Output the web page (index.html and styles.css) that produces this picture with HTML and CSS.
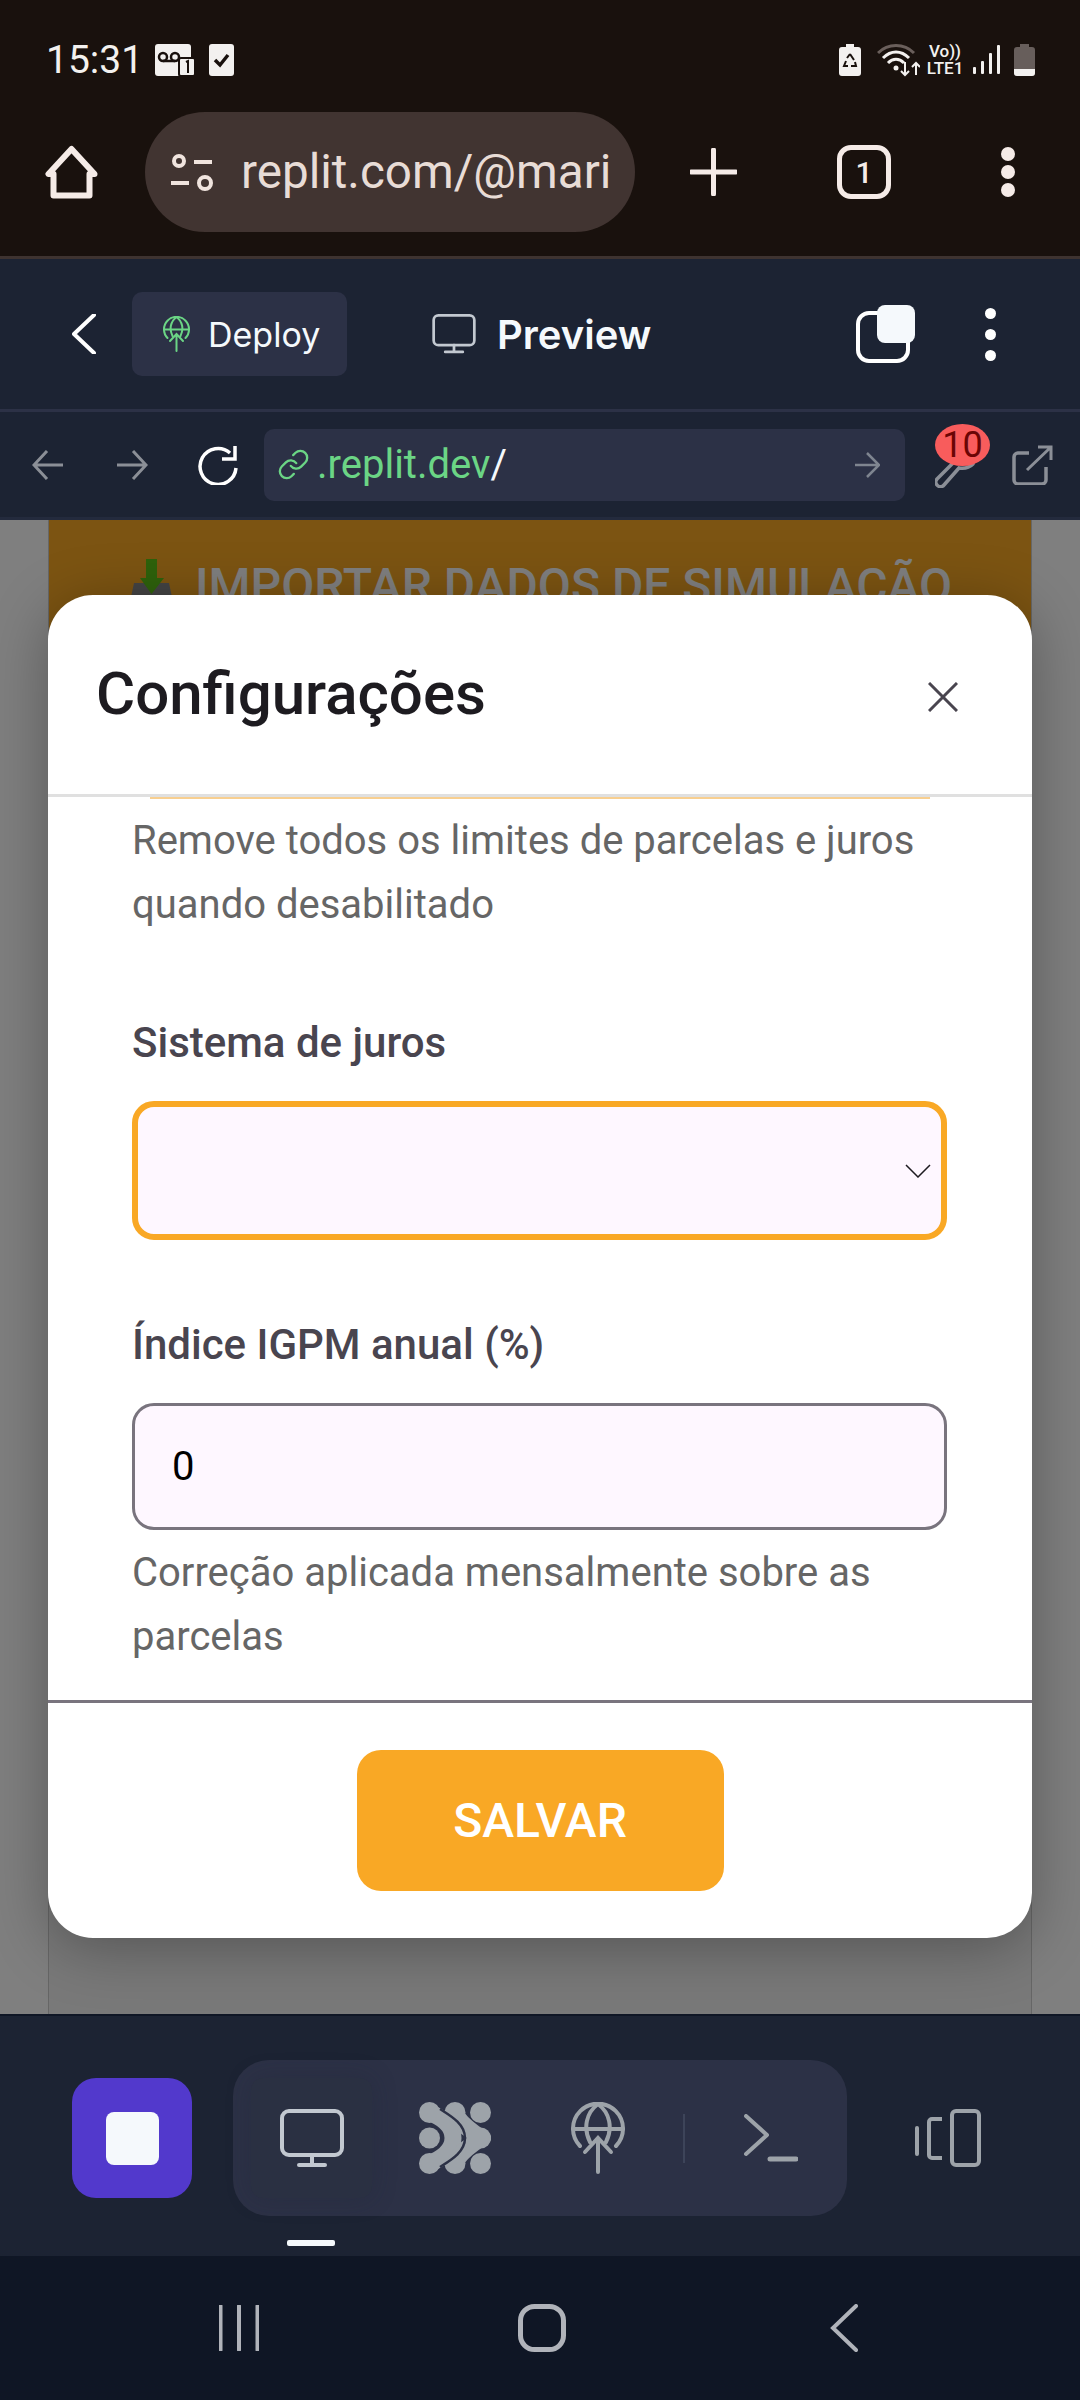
FILE: index.html
```html
<!DOCTYPE html>
<html lang="pt-BR">
<head>
    <meta charset="utf-8">
    <title>Configurações</title>
    <link rel="stylesheet" href="styles.css">
</head>
<body>
    <svg class="defs" width="0" height="0">
        <symbol id="monitor" viewBox="0 0 64 59">
            <rect x="2" y="2" width="60" height="44" rx="7" fill="none" stroke="currentColor" stroke-width="4"/>
            <path d="M32 46V56M19 56H45" fill="none" stroke="currentColor" stroke-width="4" stroke-linecap="round"/>
        </symbol>
        <symbol id="globe-up" viewBox="0 0 54 72">
            <g fill="none" stroke="currentColor" stroke-width="4" stroke-linecap="round">
                <path d="M9 44A25 25 0 1 1 45 44"/>
                <path d="M19 40C12 26 15 11 27 2C39 11 42 26 35 40"/>
                <path d="M2 27H52"/>
                <path d="M27 70V36M14 50L27 36L40 50"/>
            </g>
        </symbol>
    </svg>

    <div class="phone">
        <header class="chrome">
            <div class="status-row">
                <span class="clock">15:31</span>
                <svg class="voicemail" width="40" height="32" viewBox="0 0 40 32">
                    <rect x="0" y="0" width="36" height="32" rx="3" fill="#f3f1ef"/>
                    <g fill="none" stroke="#19110d" stroke-width="2.5">
                        <circle cx="8" cy="13" r="4"/>
                        <circle cx="20" cy="13" r="4"/>
                        <path d="M8 17H20"/>
                    </g>
                    <rect x="24" y="14" width="16" height="18" rx="2" fill="#f3f1ef" stroke="#19110d" stroke-width="2"/>
                    <path d="M31 18L33 17V29" fill="none" stroke="#19110d" stroke-width="2"/>
                </svg>
                <svg class="checkbox" width="25" height="32" viewBox="0 0 25 32">
                    <rect width="25" height="32" rx="3" fill="#f3f1ef"/>
                    <path d="M6 16L11 21L19 11" fill="none" stroke="#19110d" stroke-width="3.5"/>
                </svg>
                <div class="status-right">
                    <svg width="22" height="32" viewBox="0 0 22 32">
                        <path d="M7 0H15V3H19A3 3 0 0 1 22 6V29A3 3 0 0 1 19 32H3A3 3 0 0 1 0 29V6A3 3 0 0 1 3 3H7Z" fill="#f3f1ef"/>
                        <path d="M11 10L15 16M16 18L17 22H12M9 22H5L7 17M8 14L11 10" fill="none" stroke="#19110d" stroke-width="2"/>
                    </svg>
                    <svg class="wifi" width="43" height="33" viewBox="0 0 43 33">
                        <g fill="none" stroke-width="3">
                            <path d="M1 9C11 -1 27 -1 37 9" stroke="#6a5f5b"/>
                            <path d="M6 14C14 6 24 6 32 14" stroke="#f3f1ef"/>
                            <path d="M11 19C16 14 22 14 27 19" stroke="#f3f1ef"/>
                        </g>
                        <circle cx="19" cy="24" r="2.5" fill="#f3f1ef"/>
                        <path d="M28 18V31M24 27L28 31L32 27M39 31V20M35 23L39 19L43 23" fill="none" stroke="#f3f1ef" stroke-width="2"/>
                    </svg>
                    <div class="volte"><span>Vo))</span><span>LTE1</span></div>
                    <svg class="signal" width="28" height="30" viewBox="0 0 28 30">
                        <g fill="#f3f1ef">
                            <rect x="0" y="22" width="3" height="7" rx="1"/>
                            <rect x="8" y="16" width="3" height="13" rx="1"/>
                            <rect x="16" y="8" width="3" height="21" rx="1"/>
                            <rect x="24" y="0" width="3" height="29" rx="1"/>
                        </g>
                    </svg>
                    <svg class="battery" width="21" height="32" viewBox="0 0 21 32">
                        <path d="M6 0H15V3H18A3 3 0 0 1 21 6V29A3 3 0 0 1 18 32H3A3 3 0 0 1 0 29V6A3 3 0 0 1 3 3H6Z" fill="#675e5b"/>
                        <path d="M0 25H21V29A3 3 0 0 1 18 32H3A3 3 0 0 1 0 29Z" fill="#f3f1ef"/>
                    </svg>
                </div>
            </div>
            <div class="browser-row">
                <svg class="home-icon" width="53" height="54" viewBox="0 0 53 54">
                    <path d="M26.5 4L3.5 29H8.5V50.5H44.5V29H49.5Z" fill="none" stroke="#f5ebe7" stroke-width="6" stroke-linejoin="round"/>
                </svg>
                <div class="address">
                    <svg width="45" height="37" viewBox="0 0 45 37">
                        <g fill="none" stroke="#f0e4de" stroke-width="4">
                            <circle cx="9" cy="7" r="5"/>
                            <circle cx="35" cy="29" r="6"/>
                            <path d="M24 8H42M1 29H19"/>
                        </g>
                    </svg>
                    <span class="address-text">replit.com/@mari</span>
                </div>
                <svg class="plus-icon" width="47" height="48" viewBox="0 0 47 48">
                    <path d="M23.5 2V46M1 24H46" stroke="#f5ebe7" stroke-width="5" stroke-linecap="round"/>
                </svg>
                <div class="tab-count">1</div>
                <div class="dots dots-chrome"><i></i><i></i><i></i></div>
            </div>
        </header>

        <div class="replit-bar">
            <svg class="back-icon" width="24" height="40" viewBox="0 0 24 40">
                <path d="M22 1L2 20L22 39" fill="none" stroke="#fff" stroke-width="4" stroke-linecap="round" stroke-linejoin="round"/>
            </svg>
            <div class="deploy-chip">
                <svg class="green" width="27" height="36"><use href="#globe-up"/></svg>
                <span>Deploy</span>
            </div>
            <div class="preview-tab">
                <svg class="muted-light" width="44" height="40"><use href="#monitor"/></svg>
                <span>Preview</span>
            </div>
            <svg class="tabs-icon" width="59" height="58" viewBox="0 0 59 58">
                <rect x="2" y="8" width="50" height="48" rx="11" fill="none" stroke="#fff" stroke-width="4"/>
                <rect x="21" y="0" width="38" height="38" rx="8" fill="#f5f9fc"/>
            </svg>
            <div class="dots dots-bar"><i></i><i></i><i></i></div>
        </div>

        <div class="url-bar">
            <svg class="nav-back" width="32" height="30" viewBox="0 0 32 30">
                <path d="M15 1L2 15L15 29M2 15H31" fill="none" stroke="#8b8f97" stroke-width="3"/>
            </svg>
            <svg class="nav-forward" width="32" height="30" viewBox="0 0 32 30">
                <path d="M17 1L30 15L17 29M30 15H1" fill="none" stroke="#8b8f97" stroke-width="3"/>
            </svg>
            <svg class="nav-reload" width="44" height="40" viewBox="0 0 44 40">
                <path d="M34 8A18 18 0 1 0 40 23" fill="none" stroke="#fff" stroke-width="3.5"/>
                <path d="M39 1V14H26" fill="none" stroke="#fff" stroke-width="3.5"/>
            </svg>
            <div class="url-box">
                <svg class="green" width="33" height="33" viewBox="0 0 24 24">
                    <g fill="none" stroke="currentColor" stroke-width="1.7" stroke-linecap="round">
                        <path d="M10 13a5 5 0 0 0 7.54.54l3-3a5 5 0 0 0-7.07-7.07l-1.72 1.71"/>
                        <path d="M14 11a5 5 0 0 0-7.54-.54l-3 3a5 5 0 0 0 7.07 7.07l1.71-1.71"/>
                    </g>
                </svg>
                <span class="url-text">.replit.dev<b>/</b></span>
                <svg class="url-go" width="26" height="26" viewBox="0 0 26 26">
                    <path d="M13 1L25 13L13 25M25 13H1" fill="none" stroke="#7f8590" stroke-width="2.5"/>
                </svg>
            </div>
            <div class="wrench">
                <svg width="44" height="46" viewBox="0 0 44 46">
                    <path d="M2 37L20 19M2 37A4.5 4.5 0 0 0 9 43L24 26C30 27 35 25 38 22" fill="none" stroke="#8b8f97" stroke-width="3.5" stroke-linecap="round"/>
                </svg>
                <span class="badge">10</span>
            </div>
            <svg class="external" width="41" height="40" viewBox="0 0 41 40">
                <path d="M17 8H6A4 4 0 0 0 2 12V35A4 4 0 0 0 6 39H30A4 4 0 0 0 34 35V22" fill="none" stroke="#8b8f97" stroke-width="3.5"/>
                <path d="M15 25L39 2M26 2H39V15" fill="none" stroke="#8b8f97" stroke-width="3"/>
            </svg>
        </div>

        <main class="page">
            <div class="page-card">
                <div class="import-btn">
                    <svg width="47" height="52" viewBox="0 0 47 52">
                        <path d="M6 24H41L47 52H0Z" fill="#888"/>
                        <path d="M18 0H29V19H36L23.5 35L12 19H18Z" fill="#5cc416"/>
                    </svg>
                    <span>IMPORTAR DADOS DE SIMULAÇÃO</span>
                </div>
            </div>
            <div class="scrim"></div>

            <section class="modal">
                <div class="modal-head">
                    <h2>Configurações</h2>
                    <svg class="close-icon" width="30" height="30" viewBox="0 0 30 30">
                        <path d="M1 1L29 29M29 1L1 29" stroke="#49454f" stroke-width="3"/>
                    </svg>
                </div>
                <div class="modal-body">
                    <div class="cut-strip"></div>
                    <p class="hint">Remove todos os limites de parcelas e juros quando desabilitado</p>
                    <label class="field-label label-first">Sistema de juros</label>
                    <div class="select-box">
                        <svg width="26" height="14" viewBox="0 0 26 14">
                            <path d="M1 1L13 13L25 1" fill="none" stroke="#1d1b20" stroke-width="1.5"/>
                        </svg>
                    </div>
                    <label class="field-label label-next">Índice IGPM anual (%)</label>
                    <div class="text-box">0</div>
                    <p class="hint hint-after">Correção aplicada mensalmente sobre as parcelas</p>
                </div>
                <div class="modal-foot">
                    <button class="save-btn">SALVAR</button>
                </div>
            </section>
        </main>

        <div class="dock">
            <div class="stop-btn"><i></i></div>
            <div class="dock-pill">
                <div class="dock-item selected">
                    <svg class="muted-light" width="64" height="59"><use href="#monitor"/></svg>
                </div>
                <div class="dock-item">
                    <svg class="muted" width="72" height="72" viewBox="0 0 72 72">
                        <g fill="currentColor">
                            <circle cx="10.5" cy="10.5" r="10.5"/>
                            <circle cx="36" cy="10.5" r="10.5"/>
                            <circle cx="61.5" cy="10.5" r="10.5"/>
                            <circle cx="10.5" cy="36" r="10.5"/>
                            <circle cx="61.5" cy="36" r="10.5"/>
                            <circle cx="10.5" cy="61.5" r="10.5"/>
                            <circle cx="36" cy="61.5" r="10.5"/>
                            <circle cx="61.5" cy="61.5" r="10.5"/>
                        </g>
                        <g fill="none" stroke="currentColor" stroke-linecap="round">
                            <path d="M10.5 10.5C24 16 34 24 34 36C34 48 24 56 10.5 61.5" stroke-width="17"/>
                            <path d="M36 10.5C40 22 52 28 61.5 36C52 44 40 50 36 61.5" stroke-width="17"/>
                        </g>
                        <path d="M21 7C32 14 46 22 46 36C46 50 32 58 21 65" fill="none" stroke="#2c3146" stroke-width="2.5"/>
                    </svg>
                </div>
                <div class="dock-item">
                    <svg class="muted" width="54" height="72"><use href="#globe-up"/></svg>
                </div>
                <div class="dock-sep"></div>
                <div class="dock-item">
                    <svg class="muted" width="54" height="48" viewBox="0 0 54 48">
                        <path d="M2 2L23 21L2 40" fill="none" stroke="currentColor" stroke-width="4" stroke-linecap="round" stroke-linejoin="round"/>
                        <path d="M26 45H52" stroke="currentColor" stroke-width="5" stroke-linecap="round"/>
                    </svg>
                </div>
            </div>
            <svg class="devices muted" width="66" height="58" viewBox="0 0 66 58">
                <rect x="37" y="2" width="27" height="54" rx="4" fill="none" stroke="currentColor" stroke-width="4"/>
                <path d="M27 10H17A3 3 0 0 0 14 13V46A3 3 0 0 0 17 49H27" fill="none" stroke="currentColor" stroke-width="4"/>
                <path d="M2 19V45" stroke="currentColor" stroke-width="4" stroke-linecap="round"/>
            </svg>
            <span class="dock-marker"></span>
        </div>

        <nav class="android-nav">
            <svg class="nav-recents" width="40" height="46" viewBox="0 0 40 46">
                <path d="M1.5 1V45M20 1V45M38.5 1V45" stroke="#b0b3ba" stroke-width="4" stroke-linecap="round"/>
            </svg>
            <svg class="nav-home" width="48" height="48" viewBox="0 0 48 48">
                <rect x="2.5" y="2.5" width="43" height="43" rx="14" fill="none" stroke="#b0b3ba" stroke-width="5"/>
            </svg>
            <svg class="nav-return" width="28" height="48" viewBox="0 0 28 48">
                <path d="M26 2L3 24L26 46" fill="none" stroke="#b0b3ba" stroke-width="4" stroke-linecap="round"/>
            </svg>
        </nav>
    </div>
</body>
</html>
```

FILE: styles.css
```css
* {
    box-sizing: border-box;
}
body {
    margin: 0;
    background-color: #0f1625;
    font-family: "Roboto", "Liberation Sans", sans-serif;
}
.defs {
    position: absolute;
}
svg {
    display: block;
    flex-shrink: 0;
}
.phone {
    display: flex;
    flex-direction: column;
    width: 1080px;
    height: 2400px;
    overflow: hidden;
}
.green {
    color: #6bd585;
}
.muted {
    color: #9da3a9;
}
.muted-light {
    color: #c2c8d0;
}

/* browser chrome */
.chrome {
    height: 259px;
    background-color: #19110d;
    border-bottom: 3px solid #3e3330;
}
.status-row {
    display: flex;
    align-items: center;
    height: 100px;
    padding: 20px 45px 0 46px;
    color: #f3f1ef;
}
.clock {
    font-size: 39px;
    line-height: 32px;
    width: 109px;
}
.checkbox {
    margin-left: 14px;
}
.status-right {
    display: flex;
    align-items: center;
    margin-left: auto;
}
.wifi {
    margin-left: 16px;
}
.volte {
    display: flex;
    flex-direction: column;
    align-items: center;
    margin-left: 6px;
    width: 38px;
    font-size: 17px;
    font-weight: 500;
    line-height: 17px;
}
.signal {
    margin-left: 9px;
}
.battery {
    margin-left: 13px;
}
.browser-row {
    display: flex;
    align-items: center;
    height: 144px;
    padding-left: 45px;
}
.address {
    display: flex;
    align-items: center;
    gap: 26px;
    width: 490px;
    height: 120px;
    margin-left: 47px;
    padding-left: 25px;
    border-radius: 60px;
    background-color: #413431;
}
.address-text {
    font-size: 47.6px;
    color: #e8dcd6;
    white-space: nowrap;
}
.plus-icon {
    margin-left: 55px;
}
.tab-count {
    display: flex;
    align-items: center;
    justify-content: center;
    width: 54px;
    height: 54px;
    margin-left: 100px;
    border: 5px solid #f5ebe7;
    border-radius: 14px;
    color: #f5ebe7;
    font-size: 30px;
    font-weight: 500;
}
.dots {
    display: flex;
    flex-direction: column;
}
.dots i {
    display: block;
    border-radius: 50%;
}
.dots-chrome {
    gap: 4px;
    margin-left: 110px;
}
.dots-chrome i {
    width: 14px;
    height: 14px;
    background-color: #f5ebe7;
}
.dots-bar {
    gap: 10px;
    margin-left: 70px;
}
.dots-bar i {
    width: 11px;
    height: 11px;
    background-color: #fff;
}

/* replit top bar */
.replit-bar {
    display: flex;
    align-items: center;
    height: 153px;
    padding: 0 84px 0 72px;
    background-color: #1c2333;
    border-bottom: 3px solid #2c3146;
}
.deploy-chip {
    display: flex;
    align-items: center;
    gap: 18px;
    width: 215px;
    height: 84px;
    margin-left: 36px;
    padding-left: 31px;
    border-radius: 10px;
    background-color: #2c3146;
    color: #f5f9fc;
    font-family: "Inter", "Liberation Sans", sans-serif;
    font-size: 34px;
    font-weight: 400;
}
.preview-tab {
    display: flex;
    align-items: center;
    gap: 21px;
    margin-left: 85px;
    color: #f5f9fc;
    font-family: "Inter", "Liberation Sans", sans-serif;
    font-size: 40px;
    font-weight: 600;
}
.tabs-icon {
    margin-left: auto;
}

/* url row */
.url-bar {
    display: flex;
    align-items: center;
    height: 108px;
    padding-left: 32px;
    background-color: #1c2333;
    border-bottom: 3px solid #232a3d;
}
.nav-forward {
    margin-left: 52px;
}
.nav-reload {
    margin-left: 48px;
}
.url-box {
    display: flex;
    align-items: center;
    width: 641px;
    height: 72px;
    margin-left: 24px;
    padding-left: 13px;
    border-radius: 10px;
    background-color: #2c3146;
}
.url-text {
    margin-left: 7px;
    color: #6bd585;
    font-size: 40px;
}
.url-text b {
    color: #f5f9fc;
    font-weight: 400;
}
.url-go {
    margin-left: auto;
    margin-right: 25px;
}
.wrench {
    position: relative;
    width: 44px;
    height: 46px;
    margin-left: 30px;
}
.badge {
    position: absolute;
    left: 0;
    top: -18px;
    width: 55px;
    height: 42px;
    border-radius: 50%;
    background-color: #f85c5c;
    color: #6b0505;
    font-size: 36px;
    line-height: 42px;
    text-align: center;
}
.external {
    margin-left: 33px;
}

/* page behind the modal */
.page {
    position: relative;
    flex: 1;
    background-color: #fff;
    border-bottom: 2px solid #0f1625;
}
.page-card {
    height: 100%;
    margin: 0 48px;
    background-color: #f2f2f2;
    border-left: 1px solid #ccc;
    border-right: 1px solid #ccc;
}
.import-btn {
    display: flex;
    align-items: center;
    justify-content: center;
    gap: 20px;
    height: 130px;
    background-color: #f9a825;
    color: #fff;
    font-size: 48px;
    font-weight: 500;
    white-space: nowrap;
}
.scrim {
    position: absolute;
    inset: 0;
    background-color: rgba(0, 0, 0, 0.5);
}

/* modal */
.modal {
    position: absolute;
    left: 48px;
    top: 75px;
    display: flex;
    flex-direction: column;
    width: 984px;
    height: 1343px;
    border-radius: 45px;
    background-color: #fff;
    box-shadow: 0 10px 60px rgba(0, 0, 0, 0.3);
    overflow: hidden;
}
.modal-head {
    display: flex;
    align-items: center;
    justify-content: space-between;
    height: 202px;
    padding: 0 74px 3px 48px;
    border-bottom: 3px solid #e0e0e0;
    flex-shrink: 0;
}
.modal-head h2 {
    margin: 0;
    color: #1d1b20;
    font-size: 60px;
    font-weight: 500;
}
.close-icon {
    margin-top: 8px;
}
.modal-body {
    flex: 1;
    padding: 0 85px 0 84px;
    overflow: hidden;
}
.cut-strip {
    width: 780px;
    height: 2px;
    margin: 0 0 10px 18px;
    background-color: #f8cf90;
}
.hint {
    margin: 0;
    color: #666;
    font-size: 40px;
    line-height: 64px;
}
.hint-after {
    margin-top: 11px;
}
.field-label {
    display: block;
    color: #49454f;
    font-size: 42px;
    font-weight: 500;
    line-height: 56px;
}
.label-first {
    margin-top: 78px;
}
.label-next {
    margin-top: 77px;
}
.select-box {
    display: flex;
    align-items: center;
    justify-content: flex-end;
    height: 139px;
    margin-top: 30px;
    padding-right: 10px;
    border: 6px solid #f9a825;
    border-radius: 22px;
    background-color: #fef7ff;
}
.text-box {
    display: flex;
    align-items: center;
    height: 127px;
    margin-top: 30px;
    padding-left: 37px;
    border: 3px solid #79747e;
    border-radius: 22px;
    background-color: #fef7ff;
    color: #000;
    font-size: 40px;
}
.modal-foot {
    display: flex;
    justify-content: center;
    height: 238px;
    padding-top: 47px;
    border-top: 3px solid #79747e;
    flex-shrink: 0;
}
.save-btn {
    width: 367px;
    height: 141px;
    border: none;
    border-radius: 24px;
    background-color: #f9a825;
    color: #fff;
    font-family: inherit;
    font-size: 48px;
    font-weight: 500;
}

/* bottom dock */
.dock {
    position: relative;
    display: flex;
    align-items: center;
    height: 240px;
    padding: 4px 0 0 72px;
    background-color: #1c2333;
    flex-shrink: 0;
}
.stop-btn {
    display: flex;
    align-items: center;
    justify-content: center;
    width: 120px;
    height: 120px;
    border-radius: 24px;
    background-color: #5239cc;
}
.stop-btn i {
    display: block;
    width: 53px;
    height: 53px;
    border-radius: 8px;
    background-color: #f5f9fc;
}
.dock-pill {
    display: flex;
    align-items: center;
    gap: 22px;
    width: 614px;
    height: 156px;
    margin-left: 41px;
    padding-left: 18px;
    border-radius: 36px;
    background-color: #2c3146;
}
.dock-item {
    display: flex;
    align-items: center;
    justify-content: center;
    width: 121px;
    height: 120px;
    border-radius: 12px;
}
.dock-item.selected {
    background-color: #2a3042;
    box-shadow: 0 0 24px rgba(28, 35, 51, 0.25);
}
.dock-sep {
    width: 2px;
    height: 49px;
    margin: 0 3px;
    background-color: #3d4459;
}
.devices {
    margin-left: 68px;
}
.dock-marker {
    position: absolute;
    left: 287px;
    top: 224px;
    width: 48px;
    height: 6px;
    border-radius: 2px;
    background-color: #f5f9fc;
}

/* android nav */
.android-nav {
    display: flex;
    align-items: center;
    height: 144px;
    padding-left: 219px;
    background-color: #0f1625;
    flex-shrink: 0;
}
.nav-home {
    margin-left: 259px;
}
.nav-return {
    margin-left: 264px;
}
```
